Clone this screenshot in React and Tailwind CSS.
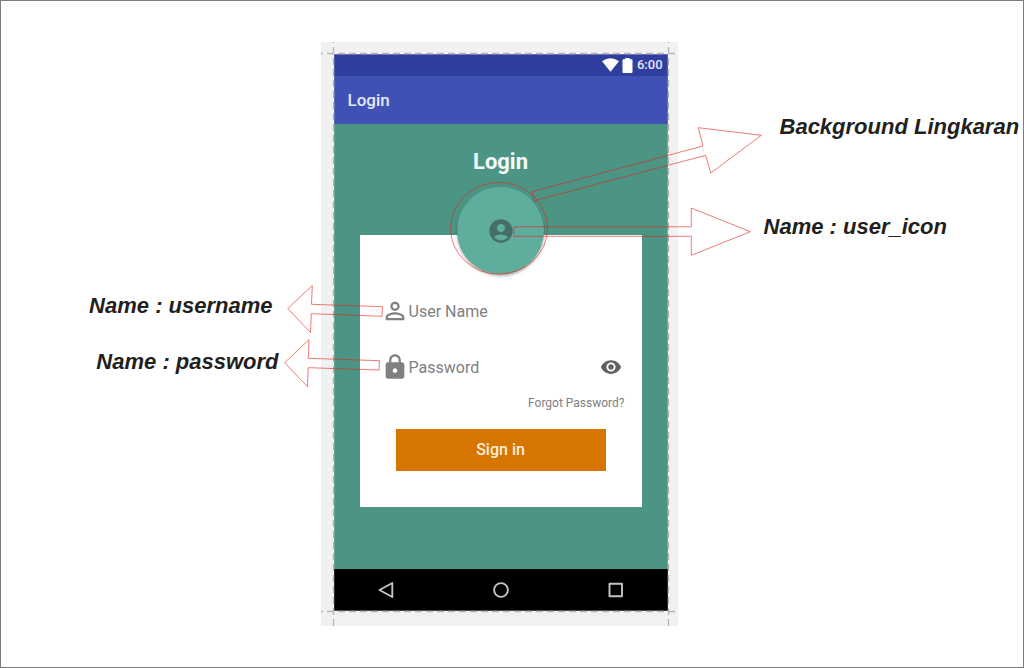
import React from "react";
import { MdPersonOutline, MdLock, MdVisibility, MdAccountCircle } from "react-icons/md";

function StatusBar() {
  return (
    <div className="flex h-[22px] items-center justify-end bg-[#303f9f] pr-[5px] text-white">
      <svg className="mr-[3px] h-3.5 w-[17px]" viewBox="0 0 17 14" fill="currentColor" aria-hidden="true">
        <path d="M0 3.2Q8.500-2.600 17 3.200L8.500 13.800Z" />
      </svg>
      <svg className="mr-1 h-[15px] w-[11px]" viewBox="0 0 11 15" fill="currentColor" aria-hidden="true">
        <path d="M3.300 0h4.400v1.300h1.800q1 0 1 1V14q0 1-1 1h-8q-1 0-1-1V2.300q0-1 1-1h1.800z" />
      </svg>
      <span className="text-[13px] leading-4 font-medium text-[#e4e6f4]">6:00</span>
    </div>
  );
}

function LoginCard() {
  return (
    <form
      className="-mt-[39px] bg-white pt-[62px] pb-9 text-[#808080]"
      onSubmit={(e) => e.preventDefault()}
    >
      <div className="flex h-7 items-center pr-5 pl-[21px]">
        <label htmlFor="username" aria-label="User Name">
          <MdPersonOutline className="size-7" />
        </label>
        <input
          id="username"
          type="text"
          placeholder="User Name"
          className="h-7 min-w-0 flex-1 text-base placeholder:text-[#808080] focus:outline-none"
        />
      </div>
      <div className="mt-7 flex h-7 items-center pr-5 pl-[21px]">
        <label htmlFor="password" aria-label="Password">
          <MdLock className="size-7" />
        </label>
        <input
          id="password"
          type="password"
          placeholder="Password"
          className="h-7 min-w-0 flex-1 text-base placeholder:text-[#808080] focus:outline-none"
        />
        <button type="button" aria-label="Show password" className="text-[#616161]">
          <MdVisibility className="size-[22px]" />
        </button>
      </div>
      <div className="mt-3.5 flex pr-[17px]">
        <a href="#forgot" className="ml-auto text-xs leading-4">
          Forgot Password?
        </a>
      </div>
      <div className="mt-[18px] px-9">
        <button type="submit" className="h-[42px] w-full bg-[#d67601] text-base font-medium text-[#fbeedd]">
          Sign in
        </button>
      </div>
    </form>
  );
}

function NavBar() {
  return (
    <nav className="flex h-[42px] items-center justify-between bg-black px-11 text-[#c4c4c4]">
      <button type="button" aria-label="Back">
        <svg className="size-4" viewBox="0 0 16 16" fill="none" stroke="currentColor" strokeWidth="1.900" strokeLinejoin="round">
          <path d="M14.300 1v14L1.500 8z" />
        </svg>
      </button>
      <button type="button" aria-label="Home">
        <svg className="size-4" viewBox="0 0 16 16" fill="none" stroke="currentColor" strokeWidth="1.900">
          <circle cx="8" cy="8" r="6.900" />
        </svg>
      </button>
      <button type="button" aria-label="Recent apps">
        <svg className="size-4" viewBox="0 0 16 16" fill="none" stroke="currentColor" strokeWidth="1.900" strokeLinejoin="round">
          <rect x="1.500" y="1.800" width="12.500" height="12.500" />
        </svg>
      </button>
    </nav>
  );
}

function Guides() {
  return (
    <svg
      className="pointer-events-none absolute inset-0 h-[584px] w-[357px]"
      viewBox="0 0 357 584"
      fill="none"
      stroke="#b4b4b4"
      strokeWidth="1.300"
      strokeDasharray="7 4"
      aria-hidden="true"
    >
      <path d="M12.500 0V584M347.500 0V584M0 11.500H357M0 569.500H357" stroke="#f6f6f6" strokeDasharray="none" />
      <path d="M12.500 -6V584M347.500 -6V584M-5 11.500H357M-5 569.500H357" />
    </svg>
  );
}

function Arrows() {
  return (
    <svg
      className="pointer-events-none absolute inset-0 h-[584px] w-[357px] overflow-visible"
      viewBox="321 42 357 584"
      fill="none"
      stroke="#e0241b"
      strokeWidth="0.6"
      aria-hidden="true"
    >
      <ellipse cx="499" cy="228.300" rx="48.500" ry="45.800" />
      <path d="M532 191.700L703 146L698.300 127.700L761.300 135.300L710.700 173L705.700 155.300L534.500 200.700Z" />
      <path d="M514 226.800H691.300V208L750.300 231.700L691.300 255.300V236.300H514Z" />
      <path d="M382.500 306.700L311.500 304.300L312.300 285.500L287.700 308.500L310.500 332.500L311.300 313.700L382 316.300Z" />
      <path d="M379.500 360.700L308.300 358.300L309 339.700L284.700 362.700L307.500 386.700L308.200 367.700L379 370Z" />
    </svg>
  );
}

function Phone() {
  return (
    <div className="relative bg-[#f1f1f1] pt-3 pr-2.5 pb-[15px] pl-[13px]">
      <div className="font-[Roboto,sans-serif]">
        <StatusBar />
        <header className="flex h-12 items-center bg-[#3f51b5] pl-3.5 text-[17px] font-medium text-[#e6e8f6]">
          Login
        </header>
        <main className="bg-[#4c9585] px-[26px] pt-6 pb-[62px]">
          <h1 className="text-center text-[22px] leading-7 font-bold text-[#f4f9f8]">Login</h1>
          <div className="relative mx-auto mt-[11px] flex size-[87px] items-center justify-center rounded-full bg-[#5fad9d] text-[#456f66] shadow-[0_2px_3px_rgba(0,0,0,0.35)]">
            <MdAccountCircle className="size-7" aria-label="User" />
          </div>
          <LoginCard />
        </main>
        <NavBar />
      </div>
      <Guides />
      <Arrows />
    </div>
  );
}

export default function App() {
  return (
    <div className="grid min-h-screen grid-cols-[320fr_357px_346fr] items-start border border-[#7c7c7c] bg-white pt-[41px] font-['Liberation_Sans',Arial,sans-serif] text-[22px] leading-7 font-bold text-[#231f20] italic">
      <div className="flex flex-col items-end pt-[250px] whitespace-nowrap">
        <p className="pr-12">Name : username</p>
        <p className="mt-7 pr-[42px]">Name : password</p>
      </div>
      <div className="font-normal text-[#808080] not-italic">
        <Phone />
      </div>
      <div className="pt-[71px] whitespace-nowrap">
        <p className="pl-[102px]">Background Lingkaran</p>
        <p className="mt-[72px] pl-[86px]">Name : user_icon</p>
      </div>
    </div>
  );
}
